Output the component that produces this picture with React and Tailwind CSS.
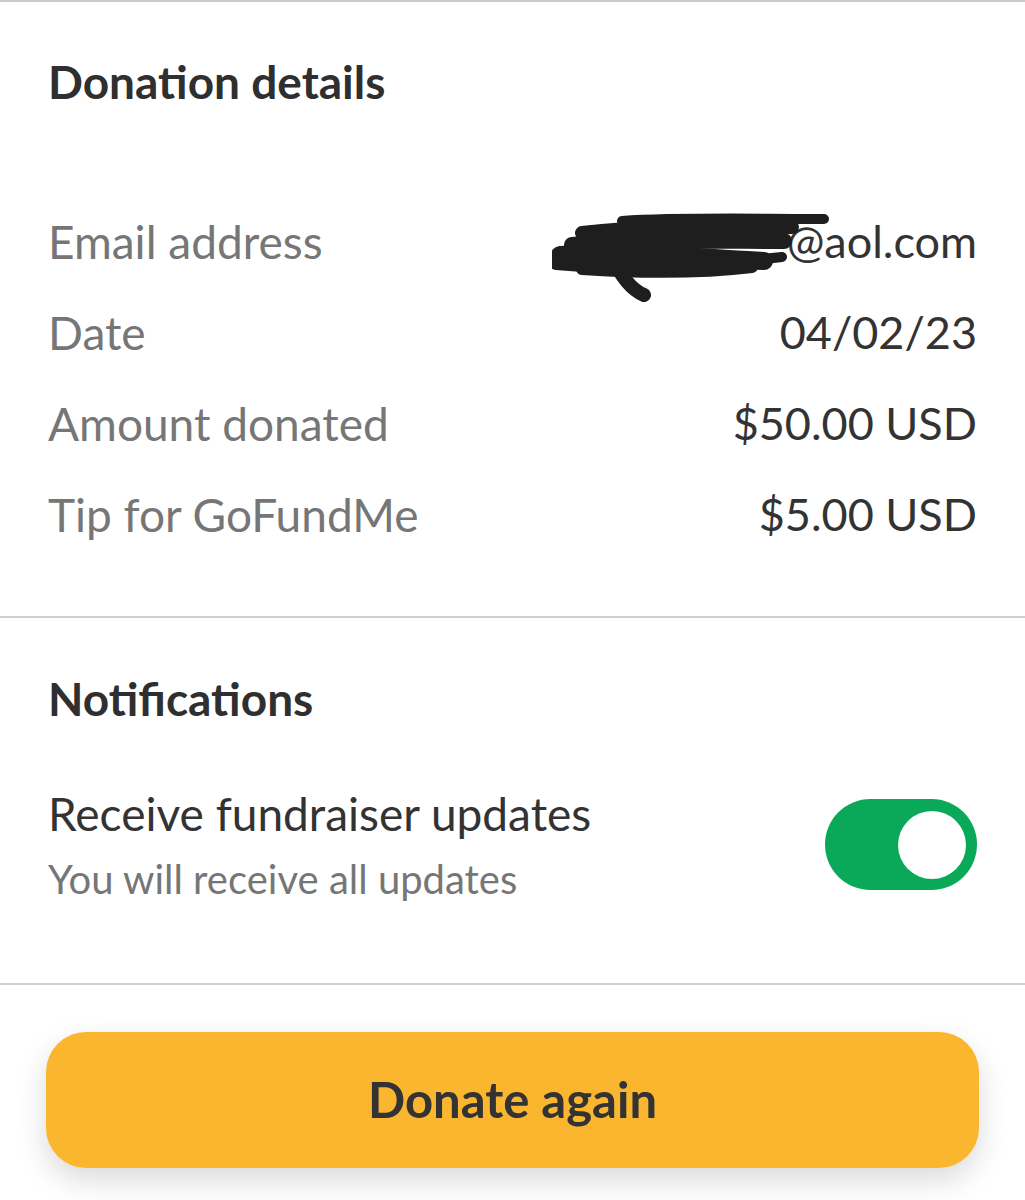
export default function App() {
  const rows = [
    { label: "Email address", value: "@aol.com", redacted: true },
    { label: "Date", value: "04/02/23" },
    { label: "Amount donated", value: "$50.00 USD" },
    { label: "Tip for GoFundMe", value: "$5.00 USD" },
  ];

  return (
    <div className="w-[1025px] h-[1200px] bg-white overflow-hidden font-['Lato',sans-serif]">
      <div className="border-t-2 border-[#c9c9c9]" />

      {/* donation details */}
      <section className="px-12 pt-[52px] pb-[56px] border-b-2 border-[#cfcfcf]">
        <h2 className="h-14 leading-[56px] text-[46px] font-bold text-[#2f2f2f]">
          Donation details
        </h2>
        <div className="mt-[86px]">
          {rows.map((r) => (
            <div key={r.label} className="relative h-[91px] flex items-center justify-between">
              <span className="text-[46px] text-[#767676]">{r.label}</span>
              <span className="text-[45px] text-[#333]">{r.value}</span>
              {r.redacted && (
                <svg
                  className="absolute left-[504px] top-[15px]"
                  width="280"
                  height="95"
                  viewBox="0 0 280 95"
                  fill="none"
                  stroke="#1e1e1e"
                  strokeLinecap="round"
                  strokeLinejoin="round"
                >
                  <path d="M70 10 C130 6 200 8 272 8" strokeWidth="10" />
                  <path d="M30 22 C100 14 170 16 240 16" strokeWidth="14" />
                  <path d="M20 34 C90 28 170 30 232 30" strokeWidth="16" />
                  <path d="M8 44 C70 40 140 46 212 50" strokeWidth="18" />
                  <path d="M4 52 C50 56 100 58 150 54" strokeWidth="14" />
                  <path d="M30 58 C90 62 150 62 200 56" strokeWidth="12" />
                  <path d="M60 48 C70 65 78 78 92 84" strokeWidth="14" />
                  <path d="M110 40 C150 50 180 52 230 46" strokeWidth="10" />
                  <path d="M40 28 C60 40 40 50 70 46" strokeWidth="16" />
                </svg>
              )}
            </div>
          ))}
        </div>
      </section>

      {/* notifications */}
      <section className="px-12 pt-[53px] pb-[80px] border-b-2 border-[#cfcfcf]">
        <h2 className="h-14 leading-[56px] text-[46px] font-bold text-[#2f2f2f]">
          Notifications
        </h2>
        <div className="mt-[59px] flex items-center justify-between">
          <div>
            <div className="text-[46px] leading-[56px] text-[#333]">Receive fundraiser updates</div>
            <div className="mt-[13px] text-[40px] leading-[48px] text-[#767676]">
              You will receive all updates
            </div>
          </div>
          <div className="w-[152px] h-[91px] rounded-full bg-[#0aa95a] flex items-center justify-end pr-[11px]">
            <div className="w-[68px] h-[68px] rounded-full bg-white" />
          </div>
        </div>
      </section>

      <div className="px-[46px] pt-[47px]">
        <button className="w-full h-[136px] rounded-[40px] bg-[#fbb62f] text-[49px] font-bold text-[#333] shadow-[0_12px_30px_rgba(0,0,0,0.15)]">
          Donate again
        </button>
      </div>
    </div>
  );
}
